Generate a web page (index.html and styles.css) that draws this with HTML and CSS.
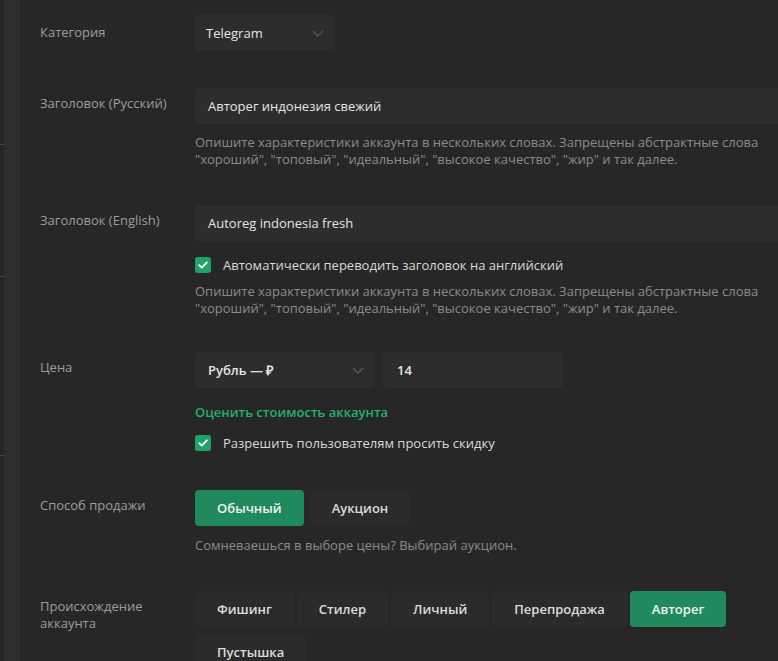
FILE: index.html
```html
<!DOCTYPE html>
<html lang="ru">
<head>
<meta charset="utf-8">
<link rel="stylesheet" href="styles.css">
</head>
<body>
<div class="layout">
  <div class="rail">
    <div class="rail-edge">
      <span class="tick t1"></span>
      <span class="tick t2"></span>
      <span class="tick t3"></span>
    </div>
  </div>
  <main class="form">
    <div class="row row-cat">
      <div class="label">Категория</div>
      <div class="field">
        <div class="select select-cat">
          <span class="select-value">Telegram</span>
          <svg class="chev" width="12" height="7" viewBox="0 0 12 7"><path d="M1 1l5 5 5-5" fill="none" stroke="#555" stroke-width="1.4"/></svg>
        </div>
      </div>
    </div>

    <div class="row">
      <div class="label">Заголовок (Русский)</div>
      <div class="field">
        <div class="input wide">Авторег индонезия свежий</div>
        <p class="hint">Опишите характеристики аккаунта в нескольких словах. Запрещены абстрактные слова<br>"хороший", "топовый", "идеальный", "высокое качество", "жир" и так далее.</p>
      </div>
    </div>

    <div class="row row-en">
      <div class="label">Заголовок (English)</div>
      <div class="field">
        <div class="input wide">Autoreg indonesia fresh</div>
        <label class="check check-en"><span class="box"><svg width="10" height="8" viewBox="0 0 10 8"><path d="M1.2 4.2l2.6 2.4L8.8 1.3" fill="none" stroke="#fff" stroke-width="1.8" stroke-linecap="round" stroke-linejoin="round"/></svg></span>Автоматически переводить заголовок на английский</label>
        <p class="hint hint-en">Опишите характеристики аккаунта в нескольких словах. Запрещены абстрактные слова<br>"хороший", "топовый", "идеальный", "высокое качество", "жир" и так далее.</p>
      </div>
    </div>

    <div class="row">
      <div class="label">Цена</div>
      <div class="field">
        <div class="price">
          <div class="select select-cur">
            <span class="select-value strong">Рубль — ₽</span>
            <svg class="chev" width="12" height="7" viewBox="0 0 12 7"><path d="M1 1l5 5 5-5" fill="none" stroke="#555" stroke-width="1.4"/></svg>
          </div>
          <div class="input num strong">14</div>
        </div>
        <a class="link">Оценить стоимость аккаунта</a>
        <label class="check check-disc"><span class="box"><svg width="10" height="8" viewBox="0 0 10 8"><path d="M1.2 4.2l2.6 2.4L8.8 1.3" fill="none" stroke="#fff" stroke-width="1.8" stroke-linecap="round" stroke-linejoin="round"/></svg></span>Разрешить пользователям просить скидку</label>
      </div>
    </div>

    <div class="row">
      <div class="label">Способ продажи</div>
      <div class="field">
        <div class="btns">
          <button class="btn active">Обычный</button>
          <button class="btn">Аукцион</button>
        </div>
        <p class="hint hint-sale">Сомневаешься в выборе цены? Выбирай аукцион.</p>
      </div>
    </div>

    <div class="row">
      <div class="label">Происхождение аккаунта</div>
      <div class="field">
        <div class="btns wrap">
          <button class="btn">Фишинг</button>
          <button class="btn">Стилер</button>
          <button class="btn">Личный</button>
          <button class="btn">Перепродажа</button>
          <button class="btn active">Авторег</button>
          <button class="btn">Пустышка</button>
        </div>
      </div>
    </div>
  </main>
</div>
</body>
</html>
```

FILE: styles.css
```css
html, body {
  margin: 0;
  padding: 0;
  height: 661px;
  overflow: hidden;
  background: #272727;
}
body {
  font-family: "Open Sans", "Liberation Sans", sans-serif;
  font-size: 13px;
  line-height: 17px;
  color: #d6d6d6;
}
.layout {
  display: flex;
  width: 778px;
  height: 661px;
}
.rail {
  flex: 0 0 20px;
  display: flex;
  background: #2e2e2e;
}
.rail-edge {
  position: relative;
  width: 4px;
  background: #252525;
}
.tick {
  position: absolute;
  left: 0;
  width: 5px;
  height: 1px;
  background: #444;
}
.t1 { top: 144px; }
.t2 { top: 276px; }
.t3 { top: 455px; }

.form {
  flex: 1;
  padding: 15px 0 0 20px;
  min-width: 0;
}
.row {
  display: grid;
  grid-template-columns: 155px 620px;
  margin-bottom: 37px;
}
.row-en { margin-bottom: 35px; }
.label {
  color: #9d9d9d;
  padding-top: 7px;
  padding-right: 20px;
}
.row-cat .label { padding-top: 9px; }
.field {
  min-width: 0;
}
.select, .input {
  box-sizing: border-box;
  height: 36px;
  background: #2d2d2d;
  border-radius: 3px;
  display: flex;
  align-items: center;
  color: #e4e4e4;
}
.select {
  justify-content: space-between;
  padding: 0 11px 0 11px;
}
.select-cat { width: 140px; }
.select-cur { width: 180px; padding-left: 13px; }
.input { padding: 0 13px; }
.input.wide { width: 620px; }
.strong { font-weight: 600; }
.chev { display: block; }

.hint {
  margin: 10px 0 0;
  color: #8b8b8b;
}
.hint-en { margin-top: 8px; }
.hint-sale { margin-top: 11px; }

.check {
  display: flex;
  align-items: center;
  height: 20px;
  gap: 12px;
  color: #d9d9d9;
}
.check-en { margin-top: 14px; }
.check-disc { margin-top: 12px; }
.box {
  width: 16px;
  height: 16px;
  border-radius: 3px;
  background: #1fa467;
  display: flex;
  align-items: center;
  justify-content: center;
}

.price {
  display: flex;
  gap: 8px;
}
.num { width: 180px; padding-left: 14px; }

.link {
  display: block;
  margin-top: 16px;
  color: #25b06e;
  font-weight: 600;
}

.btns {
  display: flex;
  gap: 6px;
}
.btns.wrap {
  flex-wrap: wrap;
  width: 560px;
  column-gap: 3px;
  row-gap: 7px;
}
.btn {
  font-family: inherit;
  font-size: 13px;
  font-weight: 600;
  height: 36px;
  padding: 0 22px;
  border: 0;
  border-radius: 4px;
  background: #2b2b2b;
  color: #dcdcdc;
}
.btn.active {
  background: #218a5c;
  color: #f2f2f2;
}
```
